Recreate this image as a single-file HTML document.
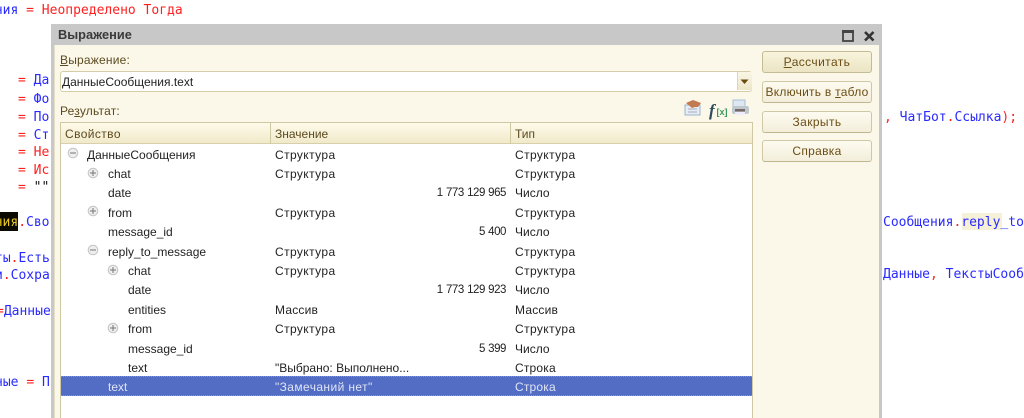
<!DOCTYPE html>
<html><head><meta charset="utf-8">
<style>
html,body{margin:0;padding:0;background:#fff}
#p{position:relative;width:1024px;height:418px;overflow:hidden;background:#fff;font-family:"Liberation Sans",sans-serif;filter:blur(.3px)}
.c{position:absolute;font:13px/16px "DejaVu Sans Mono",monospace;white-space:pre;color:#2a2aff}
.c i{font-style:normal;color:#ff1f1f}
.a{position:absolute;white-space:pre}
.t{position:absolute;white-space:pre;font-size:12px;line-height:14px;color:#222}
.s{letter-spacing:.4px}
.m{letter-spacing:.2px}
.l{color:#5c4a20}
.r{text-align:right;width:130px;font-size:11.5px;letter-spacing:-.45px;word-spacing:.5px}
.b{position:absolute;left:762px;width:108px;height:20px;border:1px solid #cfc8a4;border-bottom-color:#bdb68f;border-radius:3px;background:linear-gradient(#fdfbf0,#f3eeda);text-align:center;font-size:12px;line-height:20px;color:#6b4e16;white-space:pre}
u{text-decoration:underline}
svg{position:absolute;overflow:visible}
</style></head><body><div id="p">
<div class="c" style="left:-13px;top:3px">ения <i>=</i> <i>Неопределено Тогда</i></div>
<div class="c" style="left:18px;top:73px"><i>=</i> Да</div>
<div class="c" style="left:18px;top:92px"><i>=</i> Фо</div>
<div class="c" style="left:18px;top:110px"><i>=</i> По</div>
<div class="c" style="left:18px;top:128px"><i>=</i> Ст</div>
<div class="c" style="left:18px;top:145px"><i>=</i> <i>Не</i></div>
<div class="c" style="left:18px;top:163px"><i>=</i> <i>Ис</i></div>
<div class="c" style="left:18px;top:180px"><i>=</i> <span style="color:#111">""</span></div>
<div style="position:absolute;left:0;top:212px;width:18px;height:19px;background:#0a0a00"></div>
<div class="c" style="left:-5.3px;top:215px"><span style="color:#e8c820">ния</span><i>.</i>Сво</div>
<div class="c" style="left:-5px;top:251px">ты<i>.</i>Есть</div>
<div class="c" style="left:-5px;top:268px">и<i>.</i>Сохра</div>
<div class="c" style="left:-4px;top:304px"><i>=</i>Данные</div>
<div class="c" style="left:-5px;top:375px">ные <i>=</i> П</div>
<div class="c" style="left:884px;top:110px"><i>,</i> ЧатБот<i>.</i>Ссылка<i>);</i></div>
<div style="position:absolute;left:962px;top:213px;width:40px;height:17px;background:#f5f0d8"></div>
<div class="c" style="left:883px;top:215px">Сообщения<i>.</i>reply_to</div>
<div class="c" style="left:883px;top:267px">Данные<i>,</i> ТекстыСооб</div>

<!-- window -->
<div style="position:absolute;left:51px;top:24px;width:831px;height:394px;background:#c8c8c8"></div>
<div style="position:absolute;left:54px;top:45px;width:824px;height:373px;background:#fbf8e9;border-left:1px solid #e4dfc6"></div>
<div class="a" style="left:58px;top:28px;font-size:12.8px;font-weight:bold;line-height:14px;color:#3a3a3a">Выражение</div>
<svg style="left:841px;top:29px" width="40" height="14"><rect x="2" y="2" width="10" height="10" fill="none" stroke="#444" stroke-width="1.8"/><rect x="1" y="1" width="12" height="3" fill="#444"/><path d="M24 3l8.500 8.500M32.500 3L24 11.500" stroke="#333" stroke-width="2.600" fill="none"/></svg>

<div class="t l" style="left:60px;top:53px;letter-spacing:.2px"><u>В</u>ыражение:</div>
<div style="position:absolute;left:60px;top:71px;width:690px;height:19px;background:#fff;border:1px solid #d4cda8;border-radius:3px"></div>
<div style="position:absolute;left:737px;top:72px;width:14px;height:18px;background:linear-gradient(#faf6e4,#ece6c9);border-left:1px solid #ddd6b4"></div>
<svg style="left:740px;top:79px" width="10" height="6"><path d="M0.500 0.500h8l-4 4.500z" fill="#6b4a10"/></svg>
<div class="t" style="left:62px;top:75px;color:#222">ДанныеСообщения.text</div>
<div class="t l" style="left:60px;top:104px;letter-spacing:.2px">Ре<u>з</u>ультат:</div>

<svg style="left:684px;top:97px" width="70" height="22">
<rect x="1" y="8" width="15" height="10" fill="#e6eef5" stroke="#9ab4cc"/><path d="M4 12h9M4 15h9" stroke="#aab" stroke-width="1"/>
<path d="M2 6l7-3 8 3-3 4h-3l-3 1z" fill="#c27a50"/>
<text x="25" y="19" font-family="Liberation Serif,serif" font-style="italic" font-weight="bold" font-size="17" fill="#2f4a5c">f</text>
<text x="32.500" y="18" font-family="Liberation Sans,sans-serif" font-weight="bold" font-size="9" fill="#3a9a5a">[x]</text>
<rect x="49" y="3" width="12" height="9" fill="#dde8f2" stroke="#a8c0d4"/><rect x="48" y="9" width="17" height="8" rx="2" fill="#c0c8ce"/><rect x="51" y="12" width="10" height="2.500" fill="#776a66"/><rect x="51" y="15" width="10" height="3" fill="#eef"/>
</svg>

<!-- table -->
<div style="position:absolute;left:60px;top:122px;width:691px;height:296px;background:#fff;border-left:1px solid #cfc8a4;border-right:1px solid #cfc8a4;border-top:1px solid #cfc8a4"></div>
<div style="position:absolute;left:61px;top:123px;width:691px;height:20px;background:linear-gradient(#fdfaea,#f1e9c9);border-bottom:1px solid #d8d0aa"></div>
<div style="position:absolute;left:270px;top:123px;width:1px;height:21px;background:#cfc8a4"></div>
<div style="position:absolute;left:510px;top:123px;width:1px;height:21px;background:#cfc8a4"></div>
<div class="t l s" style="left:65px;top:127px">Свойство</div>
<div class="t l" style="left:275px;top:127px">Значение</div>
<div class="t l" style="left:515px;top:127px">Тип</div>

<div style="position:absolute;left:61px;top:376px;width:691px;height:18px;background:#536cc4;border-top:1px dotted #a09a70;border-bottom:1px dotted #a09a70"></div>

<svg style="left:0;top:0" width="1024" height="418">
<g fill="#eee" stroke="#c4c4c4"><circle cx="73" cy="153" r="4.800"/><circle cx="93" cy="173" r="4.800"/><circle cx="93" cy="211" r="4.800"/><circle cx="93" cy="250" r="4.800"/><circle cx="113" cy="270" r="4.800"/><circle cx="113" cy="328" r="4.800"/></g>
<path d="M70 153h6M90 173h6M93 170v6M90 211h6M93 208v6M90 250h6M110 270h6M113 267v6M110 328h6M113 325v6" stroke="#777" fill="none"/>
</svg>

<div class="t" style="left:87px;top:148px">ДанныеСообщения</div><div class="t s" style="left:275px;top:148px">Структура</div><div class="t s" style="left:515px;top:148px">Структура</div>
<div class="t" style="left:108px;top:167px">chat</div><div class="t s" style="left:275px;top:167px">Структура</div><div class="t s" style="left:515px;top:167px">Структура</div>
<div class="t" style="left:108px;top:186px">date</div><div class="t r" style="left:376px;top:186px">1 773 129 965</div><div class="t" style="left:515px;top:186px">Число</div>
<div class="t" style="left:108px;top:206px">from</div><div class="t s" style="left:275px;top:206px">Структура</div><div class="t s" style="left:515px;top:206px">Структура</div>
<div class="t" style="left:108px;top:225px">message_id</div><div class="t r" style="left:376px;top:225px">5 400</div><div class="t" style="left:515px;top:225px">Число</div>
<div class="t" style="left:108px;top:245px">reply_to_message</div><div class="t s" style="left:275px;top:245px">Структура</div><div class="t s" style="left:515px;top:245px">Структура</div>
<div class="t" style="left:128px;top:264px">chat</div><div class="t s" style="left:275px;top:264px">Структура</div><div class="t s" style="left:515px;top:264px">Структура</div>
<div class="t" style="left:128px;top:283px">date</div><div class="t r" style="left:376px;top:283px">1 773 129 923</div><div class="t" style="left:515px;top:283px">Число</div>
<div class="t" style="left:128px;top:303px">entities</div><div class="t m" style="left:275px;top:303px">Массив</div><div class="t m" style="left:515px;top:303px">Массив</div>
<div class="t" style="left:128px;top:322px">from</div><div class="t s" style="left:275px;top:322px">Структура</div><div class="t s" style="left:515px;top:322px">Структура</div>
<div class="t" style="left:128px;top:342px">message_id</div><div class="t r" style="left:376px;top:342px">5 399</div><div class="t" style="left:515px;top:342px">Число</div>
<div class="t" style="left:128px;top:361px">text</div><div class="t" style="left:275px;top:361px">"Выбрано: Выполнено...</div><div class="t m" style="left:515px;top:361px">Строка</div>
<div class="t" style="left:108px;top:380px;color:#dfe4f5">text</div><div class="t s" style="left:275px;top:380px;color:#dfe4f5">"Замечаний нет"</div><div class="t m" style="left:515px;top:380px;color:#dfe4f5">Строка</div>

<div class="b s" style="top:51px;background:linear-gradient(#f8f4dc,#ebe4c4);border-color:#c4bc94"><u>Р</u>ассчитать</div>
<div class="b" style="top:81px;letter-spacing:.25px">Включить в <u>т</u>абло</div>
<div class="b s" style="top:111px">Закрыть</div>
<div class="b" style="top:140px;letter-spacing:.3px">Справка</div>
</div></body></html>
